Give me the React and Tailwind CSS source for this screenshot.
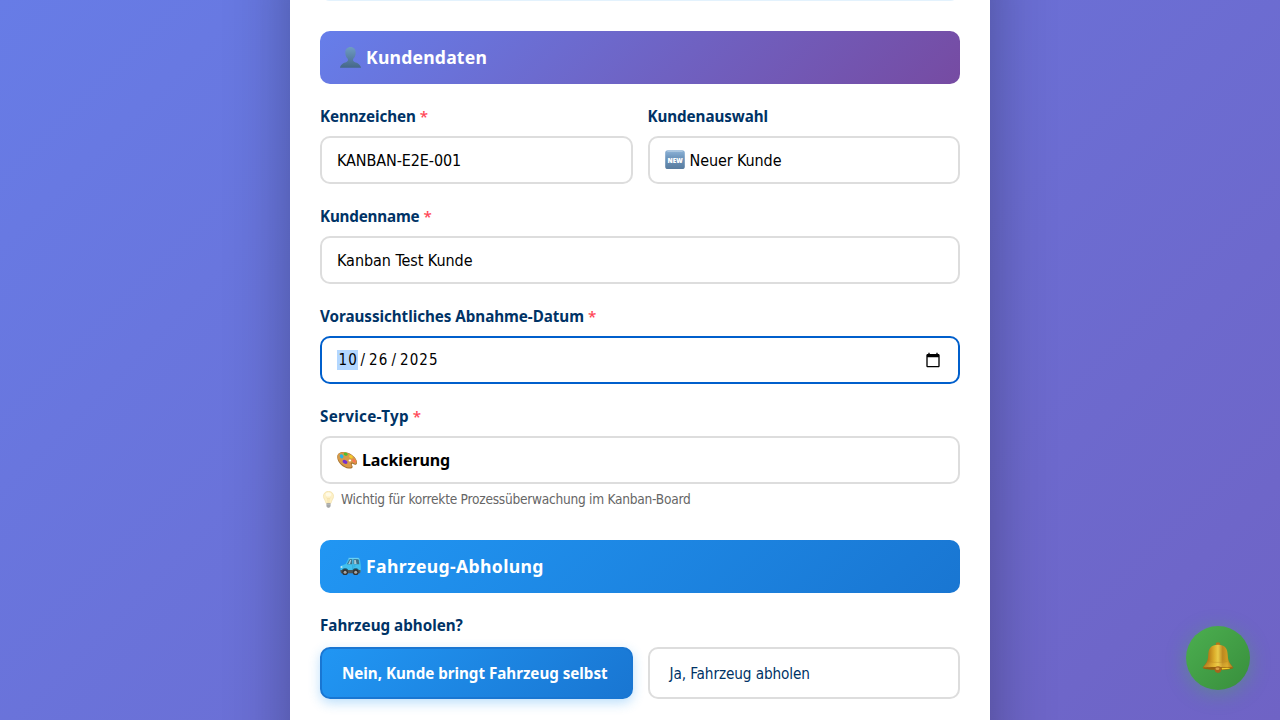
const PersonIcon = () => (
  <svg className="h-[21px] w-[21px] shrink-0" viewBox="0 0 21 21">
    <defs>
      <linearGradient id="person" x1="0" y1="0" x2="0" y2="1">
        <stop offset="0" stopColor="#6f9cc4" />
        <stop offset="1" stopColor="#456788" />
      </linearGradient>
    </defs>
    <path d="M10.500 0C7.300 0 5.200 2.200 5.300 5.700c.1 2.600 1 4.900 2.500 6.100.4 1.600.1 2.500-1.300 3.100C3.500 16 .7 17 0 20.700h21c-.7-3.700-3.500-4.700-6.500-5.800-1.400-.6-1.700-1.500-1.300-3.100 1.500-1.200 2.400-3.500 2.500-6.100C15.800 2.200 13.700 0 10.500 0z" fill="url(#person)" />
  </svg>
);

const NewIcon = () => (
  <svg className="h-5 w-5 shrink-0" viewBox="0 0 20 20">
    <defs>
      <linearGradient id="new" x1="0" y1="0" x2="0" y2="1">
        <stop offset="0" stopColor="#8fb4d8" />
        <stop offset="0.35" stopColor="#7199c0" />
        <stop offset="1" stopColor="#587c9f" />
      </linearGradient>
    </defs>
    <rect x="0.2" y="0.2" width="19.600" height="18.800" rx="2.600" fill="url(#new)" />
    <path d="M2 1.900Q2.500.7 4 .7h12q1.500 0 2 1.200z" fill="#b6cee4" opacity="0.7" />
    <text x="10" y="12.600" textAnchor="middle" textLength="15" lengthAdjust="spacingAndGlyphs" fontFamily="Open Sans, sans-serif" fontWeight="800" fontSize="7.200" fill="#fff">NEW</text>
  </svg>
);

const PaletteIcon = () => (
  <svg className="h-5 w-5 shrink-0" viewBox="0 0 20 20">
    <path d="M.3 6.500C.5 3.700 3 2 6.200 2c4.800 0 9.700 2.800 12.300 6.400 1.500 2.100 2 4.600 1 5.800-1 1.100-2.400.6-3.400-.2-.8-.6-1.300-.4-1.300.2 0 1 .9 1.600.8 2.700-.1 1.400-1.800 1.900-3.900 1.600C6.200 17.700-.2 12.200.3 6.500z" fill="#a5712f" />
    <path d="M.6 5.800C.9 3.500 3.300 2.200 6.200 2.200c4.700 0 9.400 2.700 12 6.300 1.400 2 1.900 4.100 1 5-.8.8-2.100.1-3-.7-1.100-.8-2.300-.4-2.400.7-.1 1.100 1 1.700.9 2.700-.2 1.300-1.700 1.500-3.600 1.300C5.900 16.600.2 11.200.6 5.800z" fill="#d89a48" />
    <ellipse cx="8.700" cy="4.200" rx="2.100" ry="1.500" transform="rotate(18 8.700 4.200)" fill="#52bd2c" />
    <ellipse cx="4.600" cy="6.300" rx="1.700" ry="2.200" transform="rotate(-35 4.600 6.300)" fill="#28b4ea" />
    <ellipse cx="8" cy="11.900" rx="2.600" ry="1.800" transform="rotate(24 8 11.900)" fill="#7430cf" />
    <ellipse cx="13.900" cy="6.700" rx="2.100" ry="1.400" transform="rotate(38 13.900 6.700)" fill="#f2ca2c" />
    <ellipse cx="17" cy="10.900" rx="2.100" ry="1.300" transform="rotate(50 17 10.900)" fill="#fa7352" />
    <ellipse cx="12.900" cy="10.600" rx="1.300" ry="1" fill="#fff" />
  </svg>
);

const BulbIcon = () => (
  <svg className="h-[17px] w-[17px] shrink-0" viewBox="0 0 17 17">
    <path d="M8.500.3C5.300.3 3.400 2.600 3.400 5.300c0 2.400 2 3.700 2.600 7h5c.6-3.300 2.600-4.600 2.600-7C13.600 2.600 11.700.3 8.500.3z" fill="#fdf0c6" stroke="#ecd998" strokeWidth=".5" />
    <path d="M6.500 6.600 7.800 8l.7-.8.7.8 1.300-1.400M7.800 8l.2 4M9.200 8 9 12" fill="none" stroke="#efd999" strokeWidth=".5" />
    <ellipse cx="8.500" cy="3.500" rx="2.800" ry="2" fill="#fffae6" />
    <path d="M6.500 12.200h4v2.500c0 1-.8 2-2 2s-2-1-2-2z" fill="#96999b" />
    <path d="M6.500 13.500h4M6.700 15h3.600" stroke="#d0d2d3" strokeWidth=".5" />
  </svg>
);

const CarIcon = () => (
  <svg className="h-[21px] w-[21px] shrink-0" viewBox="0 0 21 21">
    <path d="M.4 11.200c0-1 .7-1.600 2-2L5.700 8 8 3.500C8.500 2.400 9.500 2 11 2h6.800c1.200 0 1.900.5 2.200 1.700l.7 4.800c.3 2.600.3 4.800-.1 7.300H.9z" fill="#42c0ee" />
    <path d="M6.900 8.200 9 4.300c.4-.8.8-1 1.700-1h1.500v4.900z" fill="#3f6f86" />
    <path d="M13.500 3.300h3.900c.7 0 1.100.3 1.300 1l.6 3.900h-5.800z" fill="#3f6f86" />
    <path d="M8.200 8 10.100 4h1.200L10 8zM14.200 8V4h1.600l.8 4z" fill="#a4cbd9" />
    <path d="M8.500 2.300h10.200" stroke="#9be4fa" strokeWidth=".6" />
    <path d="M.5 14h20v1.700l-.5 1.500H1L.4 15z" fill="#4b5558" />
    <path d="M2 14.200C2.400 11.700 7.800 11.700 8.200 14.200zM12.600 14.200c.4-2.500 5.800-2.500 6.200 0z" fill="#1d5e79" />
    <circle cx="5.100" cy="16.200" r="2.900" fill="#333" />
    <circle cx="5.100" cy="16.200" r="1.500" fill="#a8a8a8" />
    <circle cx="15.700" cy="16.200" r="2.900" fill="#333" />
    <circle cx="15.700" cy="16.200" r="1.500" fill="#a8a8a8" />
    <ellipse cx="1.500" cy="11" rx="1" ry=".8" fill="#f1f5ec" />
    <path d="M12.800 8.700v5M14 10h1.400" stroke="#1a93c6" strokeWidth=".5" />
  </svg>
);

const BellIcon = () => (
  <svg className="h-8 w-8" viewBox="0 0 32 32">
    <defs>
      <linearGradient id="bell">
        <stop offset="0" stopColor="#8c5510" />
        <stop offset=".2" stopColor="#b97d17" />
        <stop offset=".38" stopColor="#dcae2b" />
        <stop offset=".5" stopColor="#e9cb48" />
        <stop offset=".65" stopColor="#bd8920" />
        <stop offset=".8" stopColor="#cf9c22" />
        <stop offset="1" stopColor="#7b480b" />
      </linearGradient>
      <linearGradient id="rim" x1="0" y1="0" x2="0" y2="1">
        <stop offset="0" stopColor="#ffe166" stopOpacity="0" />
        <stop offset=".65" stopColor="#f6cf48" stopOpacity=".35" />
        <stop offset="1" stopColor="#85500c" stopOpacity=".5" />
      </linearGradient>
    </defs>
    <ellipse cx="16" cy="2" rx="2.400" ry="1.700" fill="#b37517" />
    <path d="M.6 25.800C3.500 21.500 6 20 6.200 13.500 6.400 6.500 8.900 2.800 16 2.800s9.600 3.700 9.800 10.700c.2 6.500 2.700 8 5.600 12.300-2 1.300-8.200 1.800-15.400 1.800S2.600 27.100.6 25.800z" fill="url(#bell)" />
    <path d="M.6 25.800C3 22.500 5 21.500 6 18h20c1 3.500 3 4.500 5.400 7.800-2 1.300-8.200 1.800-15.400 1.800S2.600 27.100.6 25.800z" fill="url(#rim)" />
    <path d="M6.500 19.500c5 1.200 14 1.200 19 0" fill="none" stroke="#b98422" strokeWidth=".4" />
    <path d="M.8 25.700c6-1 24.400-1 30.400 0-3 1.900-9 2.100-15.200 2.100s-12.200-.2-15.200-2.100z" fill="#96600f" />
    <path d="M19.500 25.800c3-.1 6-.1 9 .2-1.500 1-5 1.400-8.500 1.400z" fill="#f0cd2c" />
    <circle cx="16" cy="27.600" r="3.300" fill="#a7651b" />
    <ellipse cx="15.500" cy="26.800" rx="1.900" ry="1.300" fill="#d99e45" />
  </svg>
);

const CalendarIcon = () => (
  <svg className="mr-0.5 h-4 w-4 shrink-0" viewBox="0 0 24 24">
    <path d="M20 3h-1V1h-2v2H7V1H5v2H4c-1.100 0-2 .9-2 2v16c0 1.100.9 2 2 2h16c1.100 0 2-.9 2-2V5c0-1.100-.9-2-2-2zm0 18H4V8h16v13z" />
  </svg>
);

const Label = ({ children, required, tracking = "" }) => (
  <div className="flex h-[18px] gap-[4px] whitespace-nowrap font-['Noto_Sans',sans-serif] text-[15.2px] leading-4 font-bold text-[#003366]">
    <span className={tracking}>{children}</span>
    {required && <span className="font-medium text-[#ff4757]">*</span>}
  </div>
);

const Field = ({ label, required, tracking, children, className = "border-[#ddd]" }) => (
  <div className="flex min-w-0 flex-1 flex-col gap-2.5">
    <Label required={required} tracking={tracking}>{label}</Label>
    <div className={"flex h-12 items-center rounded-[10px] border-2 bg-white px-[15px] text-base whitespace-nowrap text-black " + className}>
      {children}
    </div>
  </div>
);

export default function App() {
  return (
    <div className="flex h-[720px] w-[1280px] justify-center overflow-hidden bg-[linear-gradient(135deg,#677ce6,#6f63c5)] font-['DejaVu_Sans_Condensed','DejaVu_Sans',sans-serif] [font-stretch:condensed]">
      <main className="-mt-20 h-[900px] w-[700px] shrink-0 bg-white px-[30px] pt-20 shadow-[0_20px_60px_rgba(0,0,0,0.3)]">
        <div className="-mt-[29px] h-[30px] rounded-[10px] border-2 border-[#e3f2fd]" />

        <h2 className="mt-[30px] flex h-[53px] items-center gap-[5px] rounded-[10px] bg-[linear-gradient(135deg,#667eea,#764ba2)] px-5 font-['Noto_Sans',sans-serif] text-[17.6px] font-bold text-white">
          <PersonIcon />
          <span className="tracking-[0.2px]">Kundendaten</span>
        </h2>

        <div className="mt-6 flex flex-col gap-6">
          <div className="flex gap-[15px]">
            <Field label="Kennzeichen" required tracking="tracking-[-0.08px]">
              <span className="pt-px tracking-[-0.1px]">KANBAN-E2E-001</span>
            </Field>
            <Field label="Kundenauswahl" tracking="tracking-[-0.08px]">
              <NewIcon />
              <span className="ml-[5px] pt-px tracking-[-0.1px]">Neuer Kunde</span>
            </Field>
          </div>
          <Field label="Kundenname" required tracking="tracking-[-0.18px]">
            <span className="pt-px tracking-[-0.05px]">Kanban Test Kunde</span>
          </Field>
          <Field label="Voraussichtliches Abnahme-Datum" required tracking="tracking-[-0.04px]" className="border-[#005fcc]">
            <div className="flex flex-1 items-center text-[15px] tracking-[1.1px]">
              <span className="flex h-5 w-[21px] items-center bg-[#b3d7ff] pl-[1.5px]">10</span>
              <span className="w-[10px] pl-[2.500px]">/</span>
              <span className="w-[21px] pl-px">26</span>
              <span className="w-[10px] pl-[2.500px]">/</span>
              <span className="pl-px">2025</span>
            </div>
            <CalendarIcon />
          </Field>
          <Field label="Service-Typ" required tracking="tracking-[0.32px]">
            <PaletteIcon />
            <span className="ml-[5px] font-['Noto_Sans',sans-serif] font-bold tracking-[-0.1px]">Lackierung</span>
          </Field>
        </div>
        <p className="mt-1.5 flex h-[18px] items-center gap-1 text-[13.6px] tracking-[-0.25px] text-[#666]">
          <BulbIcon />
          <span>Wichtig für korrekte Prozessüberwachung im Kanban-Board</span>
        </p>

        <h2 className="mt-8 flex h-[53px] items-center gap-[5px] rounded-[10px] bg-[linear-gradient(135deg,#2196f3,#1976d2)] px-5 font-['Noto_Sans',sans-serif] text-[17.6px] font-bold text-white">
          <CarIcon />
          <span className="tracking-[0.35px]">Fahrzeug-Abholung</span>
        </h2>
        <div className="mt-6 flex flex-col gap-3">
          <Label>Fahrzeug abholen?</Label>
          <div className="flex gap-[15px] whitespace-nowrap">
            <button className="h-[52px] flex-1 rounded-[10px] border-2 border-[#1976d2] bg-[linear-gradient(135deg,#2196f3,#1976d2)] px-5 text-left font-['Noto_Sans',sans-serif] text-[15.2px] font-bold tracking-[-0.03px] text-white shadow-[0_4px_12px_rgba(33,150,243,0.3)]">
              Nein, Kunde bringt Fahrzeug selbst
            </button>
            <button className="h-[52px] flex-1 rounded-[10px] border-2 border-[#ddd] bg-white px-5 pt-0.5 text-left text-[15.2px] tracking-[-0.1px] text-[#003366]">
              Ja, Fahrzeug abholen
            </button>
          </div>
        </div>
      </main>

      <button className="fixed right-[30px] bottom-[30px] flex h-16 w-16 items-center justify-center rounded-full bg-[linear-gradient(135deg,#4caf50,#388e3c)] shadow-[0_4px_20px_rgba(76,175,80,0.4)]">
        <BellIcon />
      </button>
    </div>
  );
}
